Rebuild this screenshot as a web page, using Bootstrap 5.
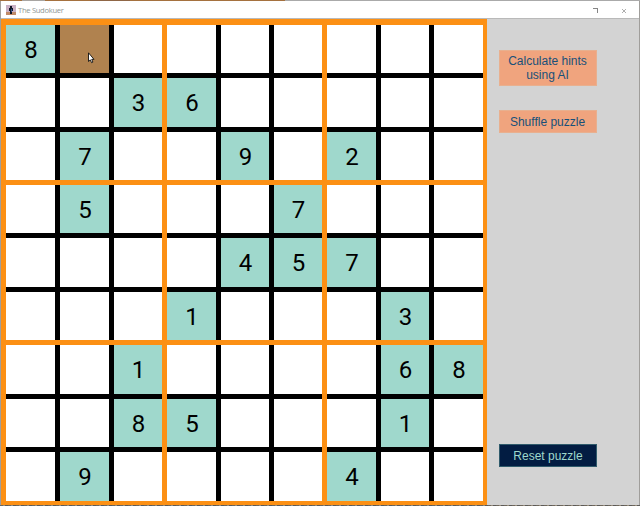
<!DOCTYPE html>
<html lang="en">
<head>
<meta charset="utf-8">
<title>The Sudokuer</title>
<link href="https://cdn.jsdelivr.net/npm/bootstrap@5.3.0/dist/css/bootstrap.min.css" rel="stylesheet">
<style>
body{width:640px;height:506px;padding:1px;font-family:"Liberation Sans",Arial,sans-serif;
 background:linear-gradient(90deg,#a5713f 0 22px,#a8a5a2 22px 45px,#a5713f 45px 90px,#8f6646 90px 130px,#a5713f 130px 285px,#aaa 285px) top/100% 1px no-repeat,
 repeating-linear-gradient(90deg,#6e675c 0 3px,#958b7c 3px 5px,#5b5a58 5px 8px) bottom/100% 1px no-repeat,#a09e9b}
.app-window{height:504px;background:#d3d3d3}
.titlebar{height:18px;background:#fff;padding-left:5px;border-bottom:1px solid #b9b9b9}
.titlebar .caption-text{font:7.6px/18px "Open Sans","Noto Sans",sans-serif;color:#8f9694;margin-left:2px;letter-spacing:-.4px;letter-spacing:-.3px}
.sudoku{width:486px;height:486px;background:#fc9014;padding:6px 4px 4px 5px;display:grid;gap:5px;grid-template:155px 155px 156px/156px 155px 156px}
.block{background:#000;display:grid;gap:5px;min-width:0;min-height:0;grid-template-rows:48px 49px 48px}
.block:nth-child(n+7){grid-template-rows:49px 48px 49px}
.block:nth-child(3n+1){grid-template-columns:49px 49px 48px}
.block:nth-child(3n+2){grid-template-columns:49px 48px 48px}
.block:nth-child(3n){grid-template-columns:49px 48px 49px}
.cell{background:#fff;color:#000;font:24px/1 Roboto,"Liberation Sans",sans-serif;padding:1px 0 0 1px}
.given{background:#9fd8cc}
.picked{background:#b0824f}
.pointer{left:28px;top:27px}
.side{padding:31px 0 0 12px}
.side .btn{width:98px;border-radius:0;font-size:12px;line-height:14px;padding:0 1px 0 0;border:1px solid #e8b08f;background:#f0a47e;color:#17507a}
.side .hints{height:36px}
.side .shuffle{height:23px;margin-top:24px}
.side .reset{height:23px;margin-top:311px;padding:0;background:#021c42;border-color:#2f5a6b;color:#9fd8cc}
</style>
<script src="https://cdn.jsdelivr.net/npm/bootstrap@5.3.0/dist/js/bootstrap.bundle.min.js"></script>
</head>
<body class="overflow-hidden">
<div class="app-window d-flex flex-column overflow-hidden">
 <header class="titlebar d-flex align-items-center flex-shrink-0">
  <svg width="10" height="10" viewBox="0 0 10 10"><path fill="#c9b0c4" d="M0 0h10v7H0z"/><path fill="#c08a68" d="M0 7h10v3H0z"/><path fill="#101828" d="M4 1h2v2h1v3H6v3H4V6H3V3h1z"/><path fill="#35508a" d="M5 4h1v3H5z"/></svg>
  <span class="caption-text">The Sudokuer</span>
  <svg class="ms-auto" width="47" height="18" viewBox="0 0 47 18" fill="none"><path d="M1 7.500h4.500v4.500M1 7.500h5" stroke="#858585"/><path d="M30 8l4 4M34 8l-4 4" stroke="#999" stroke-width=".8"/></svg>
 </header>
 <main class="d-flex flex-grow-1">
  <div class="sudoku flex-shrink-0" id="board"></div>
  <aside class="side d-flex flex-column">
   <button class="btn hints">Calculate hints<br>using AI</button>
   <button class="btn shuffle">Shuffle puzzle</button>
   <button class="btn reset">Reset puzzle</button>
  </aside>
 </main>
</div>
<script>
const rows=["8........","..36.....",".7..9.2..",".5...7...","....457..","...1...3.","..1....68","..85...1.",".9....4.."];
const pointer='<svg class="pointer position-absolute" width="7" height="12" viewBox="0 0 7 12"><path d="M.5.8v8.700l1.800-1.600 1.300 2.800 1.300-.6-1.200-2.700h2.300z" fill="#fff" stroke="#111" stroke-width=".9"/></svg>';
let html="";
for(let b=0;b<9;b++){
 html+='<div class="block">';
 for(let i=0;i<9;i++){
  const r=Math.floor(b/3)*3+Math.floor(i/3), c=b%3*3+i%3, v=rows[r][c], picked=r===0&&c===1;
  html+=`<div class="cell d-flex align-items-center justify-content-center position-relative${v!=="."?" given":""}${picked?" picked":""}">${picked?pointer:v!=="."?v:""}</div>`;
 }
 html+="</div>";
}
document.getElementById("board").innerHTML=html;
</script>
</body>
</html>
